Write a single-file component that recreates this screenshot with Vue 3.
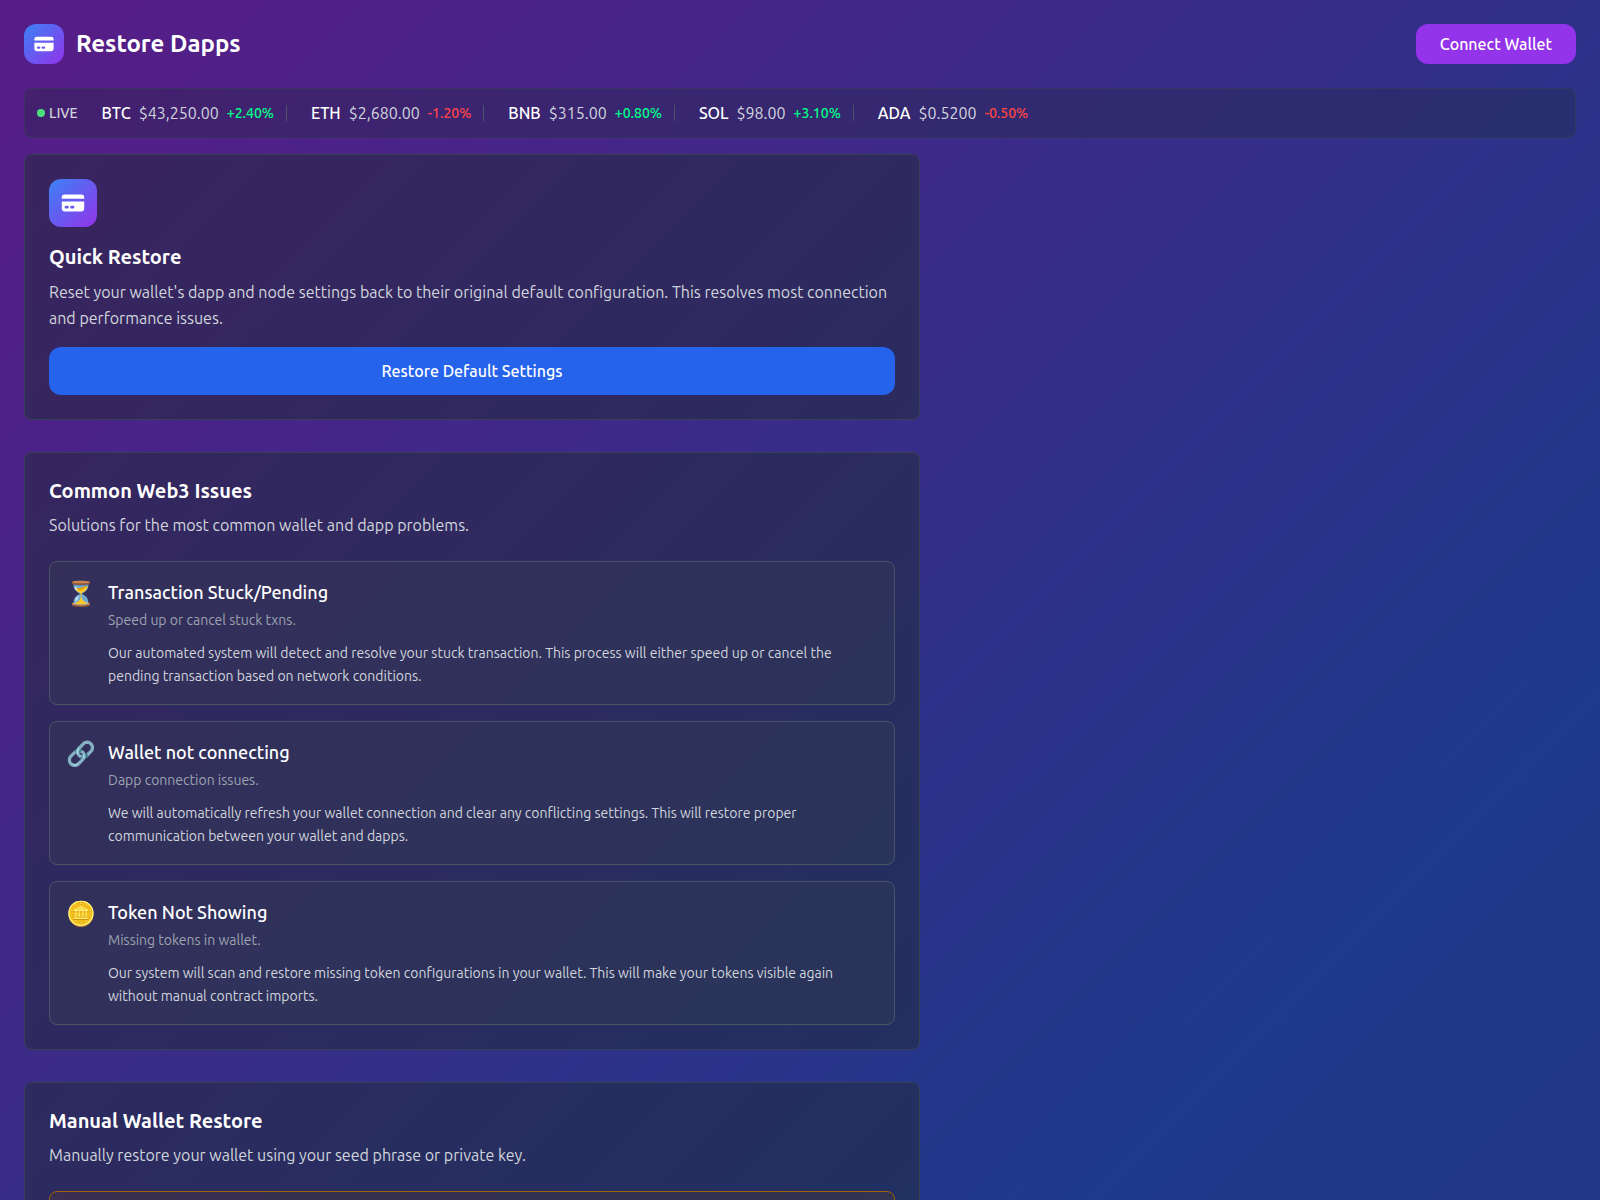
<template>
  <div class="page">
    <header class="topbar">
      <div class="brand">
        <span class="logo">
          <svg viewBox="0 0 20 20" fill="currentColor" aria-hidden="true">
            <path d="M4 4a2 2 0 00-2 2v1h16V6a2 2 0 00-2-2H4z" />
            <path fill-rule="evenodd" d="M18 9H2v5a2 2 0 002 2h12a2 2 0 002-2V9zM4 13a1 1 0 011-1h1a1 1 0 110 2H5a1 1 0 01-1-1zm5-1a1 1 0 100 2h1a1 1 0 100-2H9z" clip-rule="evenodd" />
          </svg>
        </span>
        <h1>Restore Dapps</h1>
      </div>
      <button type="button" class="connect">Connect Wallet</button>
    </header>

    <div class="ticker">
      <div class="live"><span class="dot"></span>LIVE</div>
      <div v-for="coin in coins" :key="coin.symbol" class="coin">
        <span class="symbol">{{ coin.symbol }}</span>
        <span class="price">{{ coin.price }}</span>
        <span class="change" :class="coin.change.startsWith('+') ? 'up' : 'down'">{{ coin.change }}</span>
      </div>
    </div>

    <main>
      <section class="card">
        <span class="logo large">
          <svg viewBox="0 0 20 20" fill="currentColor" aria-hidden="true">
            <path d="M4 4a2 2 0 00-2 2v1h16V6a2 2 0 00-2-2H4z" />
            <path fill-rule="evenodd" d="M18 9H2v5a2 2 0 002 2h12a2 2 0 002-2V9zM4 13a1 1 0 011-1h1a1 1 0 110 2H5a1 1 0 01-1-1zm5-1a1 1 0 100 2h1a1 1 0 100-2H9z" clip-rule="evenodd" />
          </svg>
        </span>
        <h2>Quick Restore</h2>
        <p class="lead relaxed">
          Reset your wallet's dapp and node settings back to their original default configuration. This resolves most connection and performance issues.
        </p>
        <button type="button" class="restore">Restore Default Settings</button>
      </section>

      <section class="card">
        <h2>Common Web3 Issues</h2>
        <p class="lead">Solutions for the most common wallet and dapp problems.</p>
        <div class="issues">
          <article v-for="issue in issues" :key="issue.title" class="issue">
            <span class="emoji">{{ issue.icon }}</span>
            <div>
              <h3>{{ issue.title }}</h3>
              <p class="hint">{{ issue.hint }}</p>
              <p class="detail">{{ issue.detail }}</p>
            </div>
          </article>
        </div>
      </section>

      <section class="card">
        <h2>Manual Wallet Restore</h2>
        <p class="lead">Manually restore your wallet using your seed phrase or private key.</p>
        <div class="notice"></div>
      </section>
    </main>
  </div>
</template>

<script setup>
const coins = [
  { symbol: 'BTC', price: '$43,250.00', change: '+2.40%' },
  { symbol: 'ETH', price: '$2,680.00', change: '-1.20%' },
  { symbol: 'BNB', price: '$315.00', change: '+0.80%' },
  { symbol: 'SOL', price: '$98.00', change: '+3.10%' },
  { symbol: 'ADA', price: '$0.5200', change: '-0.50%' }
];

const issues = [
  {
    icon: '⏳',
    title: 'Transaction Stuck/Pending',
    hint: 'Speed up or cancel stuck txns.',
    detail: 'Our automated system will detect and resolve your stuck transaction. This process will either speed up or cancel the pending transaction based on network conditions.'
  },
  {
    icon: '🔗',
    title: 'Wallet not connecting',
    hint: 'Dapp connection issues.',
    detail: 'We will automatically refresh your wallet connection and clear any conflicting settings. This will restore proper communication between your wallet and dapps.'
  },
  {
    icon: '🪙',
    title: 'Token Not Showing',
    hint: 'Missing tokens in wallet.',
    detail: 'Our system will scan and restore missing token configurations in your wallet. This will make your tokens visible again without manual contract imports.'
  }
];
</script>

<style>
body {
  margin: 0;
  background: #1e3a8a;
}
</style>

<style scoped>
* {
  box-sizing: border-box;
}

.page {
  min-height: 100vh;
  padding: 24px;
  background: linear-gradient(135deg, #581c87 0, #1e3a8a 1616px, #312e81 3232px);
  color: #fff;
  font-family: Ubuntu, "Noto Sans", sans-serif;
  font-size: 16px;
  line-height: 24px;
}

h1,
h2,
h3,
p {
  margin: 0;
}

button {
  border: none;
  border-radius: 12px;
  color: #fff;
  font: inherit;
  cursor: pointer;
}

.topbar {
  display: flex;
  justify-content: space-between;
  align-items: center;
  margin-bottom: 24px;
}

.brand {
  display: flex;
  align-items: center;
  gap: 12px;
}

.logo {
  display: flex;
  align-items: center;
  justify-content: center;
  width: 40px;
  height: 40px;
  border-radius: 12px;
  background: linear-gradient(135deg, #3b82f6, #9333ea);
}

.logo svg {
  width: 24px;
  height: 24px;
}

.logo.large {
  width: 48px;
  height: 48px;
  margin-bottom: 16px;
}

.logo.large svg {
  width: 28px;
  height: 28px;
}

h1 {
  font-size: 24px;
  font-weight: 600;
  line-height: 32px;
}

.connect {
  padding: 8px 24px;
  background: #9333ea;
  font-weight: 500;
}

.ticker {
  display: flex;
  align-items: center;
  gap: 24px;
  padding: 12px;
  margin-bottom: 16px;
  border: 1px solid rgba(55, 65, 81, 0.5);
  border-radius: 8px;
  background: rgba(31, 41, 55, 0.3);
}

.live {
  display: flex;
  align-items: center;
  gap: 4px;
  color: #d1d5db;
  font-size: 14px;
  font-weight: 500;
}

.dot {
  width: 8px;
  height: 8px;
  border-radius: 50%;
  background: #4ade80;
}

.coin {
  display: flex;
  align-items: center;
  gap: 8px;
}

.coin:not(:last-child)::after {
  content: "";
  width: 1px;
  height: 16px;
  margin-left: 4px;
  background: #4b5563;
}

.symbol {
  font-weight: 500;
}

.price {
  color: #d1d5db;
}

.change {
  font-size: 14px;
  font-weight: 500;
}

.up {
  color: #00ff88;
}

.down {
  color: #ff4444;
}

main {
  display: flex;
  flex-direction: column;
  gap: 32px;
  max-width: 896px;
}

.card {
  padding: 24px;
  border: 1px solid #374151;
  border-radius: 8px;
  background: rgba(31, 41, 55, 0.5);
}

h2 {
  margin-bottom: 8px;
  font-size: 20px;
  font-weight: 600;
  line-height: 28px;
}

.lead {
  color: #d1d5db;
}

.lead.relaxed {
  line-height: 26px;
}

.restore {
  width: 100%;
  padding: 12px;
  margin-top: 16px;
  background: #2563eb;
  font-weight: 500;
}

.issues {
  display: flex;
  flex-direction: column;
  gap: 16px;
  margin-top: 24px;
}

.issue {
  display: flex;
  gap: 12px;
  padding: 16px;
  border: 1px solid #4b5563;
  border-radius: 8px;
  background: rgba(55, 65, 81, 0.3);
}

.emoji {
  font-size: 24px;
  line-height: 32px;
}

h3 {
  margin-bottom: 4px;
  font-size: 18px;
  font-weight: 500;
  line-height: 28px;
}

.hint {
  margin-bottom: 12px;
  color: #9ca3af;
  font-size: 14px;
  line-height: 20px;
}

.detail {
  color: #d1d5db;
  font-size: 14px;
  line-height: 23px;
}

.notice {
  height: 96px;
  margin-top: 24px;
  border: 1px solid #a16207;
  border-radius: 8px;
  background: rgba(113, 63, 18, 0.2);
}
</style>
